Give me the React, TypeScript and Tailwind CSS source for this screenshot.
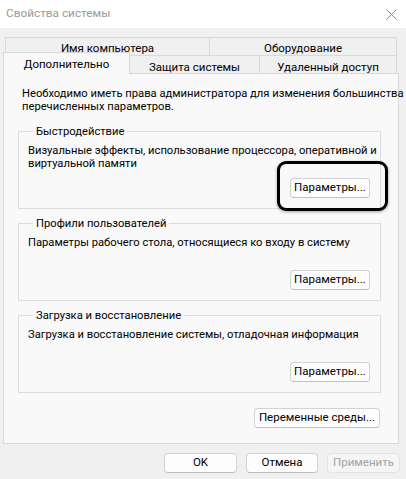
import type { ReactNode } from 'react'

const font = { fontFamily: 'Roboto, "Liberation Sans", Arial, sans-serif' }

function Btn({ children, w = 'w-[80px]', disabled = false }: { children: ReactNode; w?: string; disabled?: boolean }) {
  return (
    <button
      disabled={disabled}
      className={
        disabled
          ? `${w} block h-[20px] rounded-[4px] border border-[#e3e3e3] bg-[#f5f5f5] text-[11.5px] leading-none text-[#a3a3a3]`
          : `${w} block h-[20px] rounded-[4px] border border-[#d2d2d2] border-b-[#bfbfbf] bg-[#fdfdfd] text-[11.5px] leading-none text-black`
      }
    >
      {children}
    </button>
  )
}

function Group({ title, text, highlight = false }: { title: string; text: ReactNode; highlight?: boolean }) {
  return (
    <fieldset className="min-w-0 border border-[#dcdcdc] pl-[9px] pr-[10px]">
      <legend className="ml-[5px] px-[3px] text-[11.2px] leading-[13px]">{title}</legend>
      <div className="flex h-[70px] flex-col pb-[10px]">
        <div className="whitespace-nowrap pt-[6px] text-[11.2px] leading-[13px]">{text}</div>
        <div className="relative mt-auto self-end">
          <Btn>Параметры...</Btn>
          {highlight && (
            <span className="pointer-events-none absolute -left-[13px] -right-[18px] -top-[17px] -bottom-[13px] rounded-[9px] border-[3px] border-black shadow-[0_1px_3px_rgba(0,0,0,0.35)]" />
          )}
        </div>
      </div>
    </fieldset>
  )
}

export default function App() {
  return (
    <div className="flex h-[479px] w-[406px] flex-col bg-[#f0f0f0] text-black" style={font}>
      {/* title bar */}
      <div className="flex h-[28px] items-center justify-between bg-white pl-[6px] pr-[9px]">
        <span className="text-[11.8px] text-[#9a9a9a]">Свойства системы</span>
        <svg width="11" height="11" viewBox="0 0 11 11" className="text-[#8c8c8c]">
          <path d="M0.5 0.5L10.5 10.5M10.5 0.5L0.5 10.5" stroke="currentColor" strokeWidth="1" fill="none" />
        </svg>
      </div>

      {/* tabs */}
      <div className="mt-[9px] flex h-[18px] ml-[5px] w-[392px] text-[11.5px]">
        <div className="flex w-[204px] justify-center border-l border-t border-[#d9d9d9] pt-[2px]">Имя компьютера</div>
        <div className="flex flex-1 justify-center border-l border-r border-t border-[#d9d9d9] pt-[2px]">Оборудование</div>
      </div>
      <div className="ml-[3px] flex h-[18px] w-[394px] items-end text-[11.5px]">
        <div className="relative z-10 -mb-[1px] flex h-[22px] w-[127px] justify-center border-l border-r border-t border-[#d9d9d9] bg-[#f9f9f9] pt-[3px]">
          Дополнительно
        </div>
        <div className="flex h-[18px] w-[129px] justify-center border-t border-[#d9d9d9] pt-[3px]">Защита системы</div>
        <div className="flex h-[18px] flex-1 justify-center border-l border-r border-t border-[#d9d9d9] pt-[3px]">Удаленный доступ</div>
      </div>

      {/* panel */}
      <div className="ml-[3px] flex w-[396px] flex-col border border-[#d9d9d9] bg-[#f9f9f9] pl-[14px] pr-[17px] pt-[13px] pb-[15px]">
        <p className="whitespace-nowrap pl-[4px] text-[11.2px] leading-[13px]">
          Необходимо иметь права администратора для изменения большинства
          <br />
          перечисленных параметров.
        </p>
        <div className="mt-[12px] flex flex-col gap-[8px]">
          <Group
            title="Быстродействие"
            highlight
            text={
              <>
                Визуальные эффекты, использование процессора, оперативной и
                <br />
                виртуальной памяти
              </>
            }
          />
          <Group title="Профили пользователей" text="Параметры рабочего стола, относящиеся ко входу в систему" />
          <Group title="Загрузка и восстановление" text="Загрузка и восстановление системы, отладочная информация" />
        </div>
        <div className="mt-[15px] mr-[1px] flex justify-end">
          <Btn w="w-[126px]">Переменные среды...</Btn>
        </div>
      </div>

      {/* dialog buttons */}
      <div className="mt-[9px] flex justify-end gap-[9px] pr-[6px]">
        <Btn w="w-[73px]">OK</Btn>
        <Btn w="w-[72px]">Отмена</Btn>
        <Btn w="w-[73px]" disabled>
          Применить
        </Btn>
      </div>
    </div>
  )
}
